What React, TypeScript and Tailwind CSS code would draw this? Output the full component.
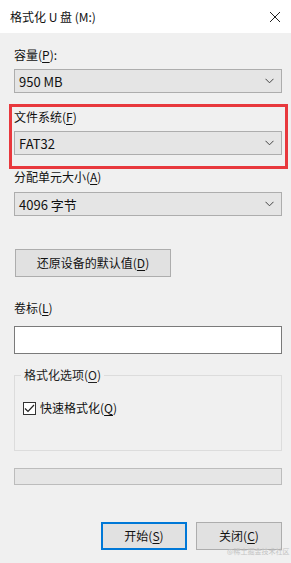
import React from 'react';

function Key({ k }: { k: string }) {
  return <span className="underline underline-offset-2">{k}</span>;
}

function Select({ value }: { value: string }) {
  return (
    <div className="flex h-[24px] items-center justify-between border border-[#adadad] bg-[#e5e5e5] pl-[4px] pr-[7px]">
      <span className="text-[13px] leading-none text-[#111]">{value}</span>
      <svg width="9" height="6" viewBox="0 0 9 6" fill="none">
        <path d="M0.5 0.8 L4.5 4.8 L8.5 0.8" stroke="#444" strokeWidth="1" />
      </svg>
    </div>
  );
}

export default function App() {
  return (
    <div className="relative h-[563px] w-[291px] overflow-hidden bg-[#f0f0f0] font-['Noto_Sans_CJK_SC',sans-serif] text-[12px] leading-[16px] text-[#111]">
      {/* title bar */}
      <div className="flex h-[33px] items-center justify-between bg-white pl-[10px] pr-[10px]">
        <span className="text-[12px]">格式化 U 盘 (M:)</span>
        <svg width="12" height="12" viewBox="0 0 12 12">
          <path d="M1 1 L11 11 M11 1 L1 11" stroke="#222" strokeWidth="1" />
        </svg>
      </div>

      <div className="flex flex-col px-[14px] pr-[9px]">
        <div className="mt-[14px]">
          容量(<Key k="P" />):
        </div>
        <div className="mt-[6px]">
          <Select value="950 MB" />
        </div>

        {/* highlighted section */}
        <div className="relative mt-[16px]">
          <div className="pointer-events-none absolute -left-[5px] -right-[6px] -top-[5px] -bottom-[14px] border-[3px] border-[#e8383d]" />
          <div>
            文件系统(<Key k="F" />)
          </div>
          <div className="mt-[6px]">
            <Select value="FAT32" />
          </div>
        </div>

        <div className="mt-[14px]">
          分配单元大小(<Key k="A" />)
        </div>
        <div className="mt-[7px]">
          <Select value="4096 字节" />
        </div>

        <button className="mt-[33px] flex h-[28px] w-[156px] items-center justify-center border border-[#adadad] bg-[#e1e1e1] text-[12px] ml-[1px]">
          还原设备的默认值(<Key k="D" />)
        </button>

        <div className="mt-[23px]">
          卷标(<Key k="L" />)
        </div>
        <div className="mt-[10px] h-[28px] border border-[#7a7a7a] bg-white" />

        {/* group box */}
        <div className="relative mt-[21px] h-[76px] border border-[#dcdcdc]">
          <div className="absolute -top-[9px] left-[6px] bg-[#f0f0f0] px-[3px] text-[#222]">
            格式化选项(<Key k="O" />)
          </div>
          <div className="ml-[8px] mt-[24px] flex items-center gap-[4px]">
            <div className="flex h-[13px] w-[13px] items-center justify-center border border-[#333] bg-white">
              <svg width="11" height="9" viewBox="0 0 11 9" fill="none">
                <path d="M1 4.5 L4 7.5 L10 1" stroke="#222" strokeWidth="1.2" />
              </svg>
            </div>
            <span>
              快速格式化(<Key k="Q" />)
            </span>
          </div>
        </div>

        {/* progress */}
        <div className="mt-[17px] h-[17px] border border-[#bcbcbc] bg-[#e6e6e6]" />

        <div className="mt-[37px] flex justify-end gap-[9px]">
          <button className="flex h-[28px] w-[86px] items-center justify-center border-2 border-[#0078d7] bg-[#e1e1e1] text-[12px]">
            开始(<Key k="S" />)
          </button>
          <button className="flex h-[28px] w-[86px] items-center justify-center border border-[#adadad] bg-[#e1e1e1] text-[12px]">
            关闭(<Key k="C" />)
          </button>
        </div>
      </div>

      <div className="pointer-events-none absolute left-[227px] top-[546px] whitespace-nowrap text-[7px] leading-[10px] text-[#c4c4c4]">
        @稀土掘金技术社区
      </div>
    </div>
  );
}
